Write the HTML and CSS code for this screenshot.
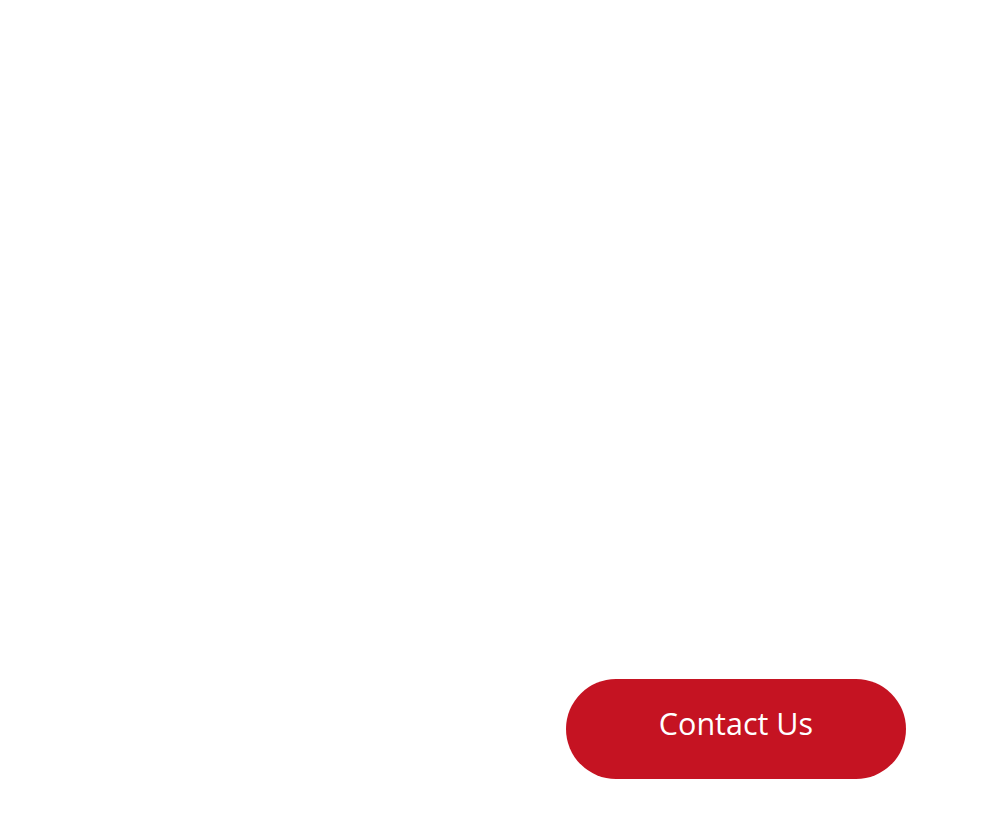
FILE: index.html
```html
<!DOCTYPE html>
<html>
<head>
<meta charset="utf-8">
<link rel="stylesheet" href="styles.css">
</head>
<body>
<div class="page">
  <a class="contact-btn" href="#">Contact Us</a>
</div>
</body>
</html>
```
FILE: styles.css
```css
html, body {
  margin: 0;
  padding: 0;
  background: #ffffff;
}
.page {
  box-sizing: border-box;
  height: 814px;
  display: flex;
  flex-direction: column;
  justify-content: flex-end;
  align-items: flex-end;
  padding: 0 98px 35px 0;
}
.contact-btn {
  box-sizing: border-box;
  display: flex;
  align-items: center;
  justify-content: center;
  width: 340px;
  height: 100px;
  padding-bottom: 12px;
  border-radius: 50px;
  background: #c51322;
  color: #ffffff;
  font-family: "Open Sans", sans-serif;
  font-size: 30.5px;
  text-decoration: none;
}
```
